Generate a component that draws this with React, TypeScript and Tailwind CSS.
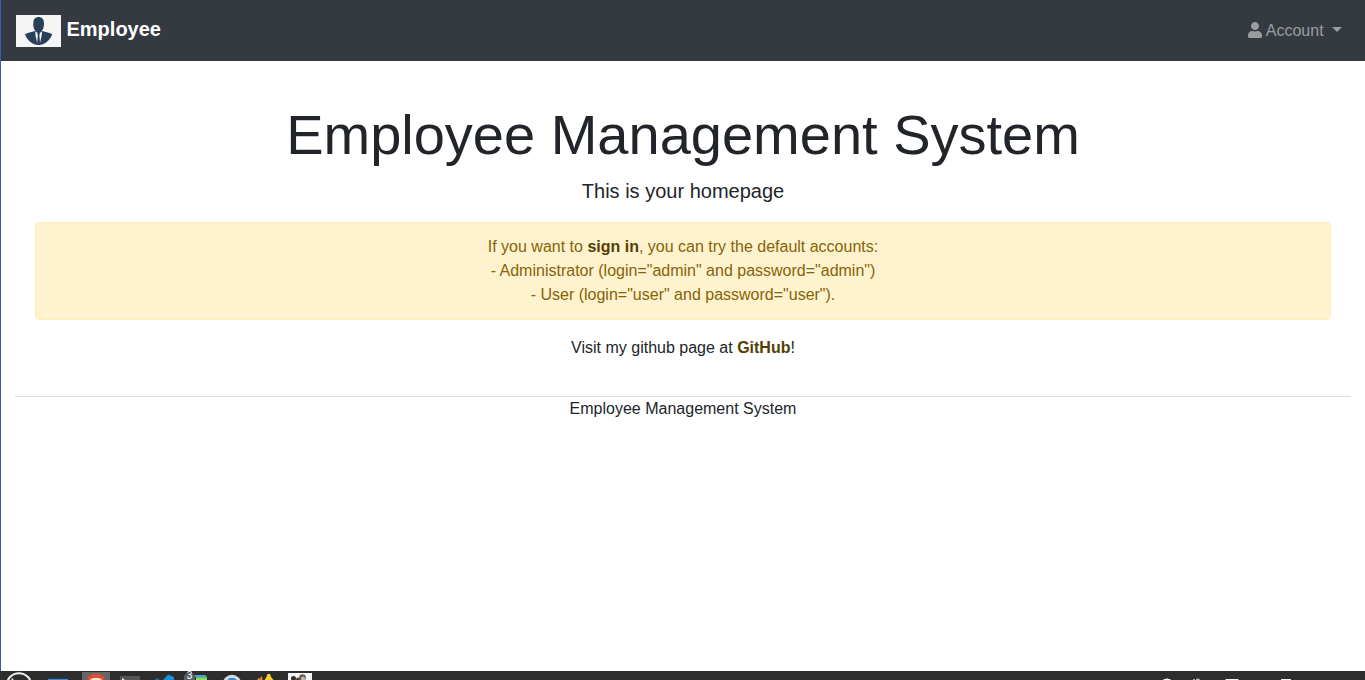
import React from "react";

function Portrait() {
  return (
    <svg viewBox="0 0 45 32" className="block h-8 w-[45px]" aria-hidden="true">
      <rect width="45" height="32" fill="#f5f5f5" />
      <path
        d="M17.800 16.200C15 17.400 11.500 17.400 9 19.300C11.500 26 16.500 29.900 22.600 29.900S33.700 26 36.200 19.300C33.700 17.400 30.200 17.400 27.400 16.200z"
        fill="#273f58"
      />
      <path d="M19.200 16.500L22.600 18.500L26 16.500L25.600 21L23.900 28.500H21.300L19.600 21z" fill="#f5f5f5" />
      <path d="M21.300 18h2.600l-.5 2.500l.8 9.200h-3.200l.8-9.200z" fill="#273f58" />
      <path d="M17.400 7.500C17.400 4 19.500 1.900 22.600 1.900S27.900 4 27.900 7.500C28.300 12.500 26.800 15.200 24.800 17H20.400C18.400 15.200 16.900 12.500 17.400 7.500z" fill="#273f58" />
    </svg>
  );
}

function UserIcon() {
  return (
    <svg viewBox="0 0 448 512" className="mb-px h-4 w-3.5" fill="currentColor" aria-hidden="true">
      <path d="M224 256c70.700 0 128-57.300 128-128S294.700 0 224 0 96 57.300 96 128s57.300 128 128 128zm89.600 32h-16.700c-22.200 10.200-46.900 16-72.900 16s-50.600-5.800-72.900-16h-16.700C60.200 288 0 348.200 0 422.400V464c0 26.500 21.500 48 48 48h352c26.500 0 48-21.500 48-48v-41.600c0-74.200-60.200-134.400-134.400-134.400z" />
    </svg>
  );
}

function Launchers() {
  return (
    <svg width="330" height="9" viewBox="0 0 330 9" className="block" aria-hidden="true">
      <circle cx="19" cy="14.500" r="12.300" fill="none" stroke="#eeeeee" strokeWidth="2" />
      <path d="M11.500 7.500h1.800V9h-1.800z" fill="#eeeeee" />
      <path d="M48 6.500h20V9H48z" fill="#20395f" />
      <path d="M48 8h20v1H48z" fill="#4b87cb" />
      <path d="M82 1h28v8H82z" fill="#666666" />
      <path d="M87.500 9V6l3-1L92 3h8l1.500 2 3 1v3z" fill="#ea4b2b" />
      <path d="M90.500 9V8l3-1h5l3 1v1z" fill="#f7e9e4" />
      <rect x="120" y="5" width="20" height="8" rx="1" fill="#555555" />
      <path d="M122 7l3 2h-3z" fill="#eeeeee" />
      <path d="M163 9l5-5.500 6 2.500v3z" fill="#1592dc" />
      <path d="M155 8l2-1 3 2h-5z" fill="#146ba5" />
      <path d="M196 4h9l2 2v3h-11z" fill="#5bc965" />
      <path d="M195 4h10l1 2h-11z" fill="#4e9cdf" />
      <path d="M196 7.500h11V9h-11z" fill="#9ee05c" />
      <circle cx="189.500" cy="7" r="5.700" fill="#596169" />
      <text x="186.700" y="8.400" fontSize="10" fontFamily="Liberation Sans, sans-serif" fill="#ffffff">3</text>
      <circle cx="232" cy="13" r="9.300" fill="#dadada" />
      <path d="M227.500 9l2-2h5l2.500 2z" fill="#348ce0" />
      <path d="M257 9l1.500-2 1 .5L262 5l.500 4z" fill="#ef7833" />
      <path d="M264.500 9l2-3 1-3h2.500l1 3 2.500 3z" fill="#f9d02d" />
      <path d="M288 2h24v7h-24z" fill="#f6f6f6" />
      <circle cx="293.500" cy="7.500" r="2.500" fill="#35302d" />
      <circle cx="298" cy="8.500" r="2" fill="#4b403a" />
      <circle cx="302.500" cy="6.500" r="3.300" fill="#625950" />
      <circle cx="303" cy="7.500" r="2" fill="#c8b8ab" />
    </svg>
  );
}

function TrayIcons() {
  return (
    <svg width="225" height="9" viewBox="0 0 225 9" className="block" fill="#eeeeee" aria-hidden="true">
      <path d="M23 9l1-1h1.500l.5-.5h2l.5.5h1.500l1 1z" />
      <path d="M53 8h2v1h-2zM56 8l1-.5h2l1 1.500h-4z" opacity=".7" />
      <path d="M85 9l1-1h12l1 1zM141 8h10v1h-10z" />
    </svg>
  );
}

export default function App() {
  return (
    <div className="flex h-[680px] w-full flex-col overflow-hidden bg-white font-['Liberation_Sans',Arial,sans-serif] text-base text-[#212529]">
      <div className="h-[671px] shrink-0 border-l border-[#3f58b5]">
        <nav className="flex h-[61px] items-center justify-between bg-[#353a40] pr-[23px] pl-[15px]">
          <a href="#" className="flex items-center text-white">
            <Portrait />
            <span className="ml-[5.5px] pb-1 text-xl leading-[30px] font-bold">Employee</span>
          </a>
          <button type="button" className="flex items-center text-[#9a9da0]">
            <UserIcon />
            <span className="ml-[3.6px]">Account</span>
            <span className="mb-[3px] ml-[8.400px] border-x-[5px] border-t-[5px] border-x-transparent border-t-current" />
          </button>
        </nav>
        <main className="px-[34px] pt-10 text-center">
          <h1 className="mb-2 text-[56px] leading-[67px]">Employee Management System</h1>
          <p className="mb-4 text-xl leading-[30px]">This is your homepage</p>
          <div className="mb-4 rounded border border-[#ffeeba] bg-[#fff2cf] p-3 text-[#856404]">
            <p>If you want to <b className="text-[#533f03]">sign in</b>, you can try the default accounts:</p>
            <p>- Administrator (login="admin" and password="admin")</p>
            <p>- User (login="user" and password="user").</p>
          </div>
          <p>Visit my github page at <b className="text-[#533f03]">GitHub</b>!</p>
        </main>
        <footer className="mx-3.5 mt-9 border-t border-[#dedede] text-center">
          <p>Employee Management System</p>
        </footer>
      </div>
      <div className="flex h-[9px] shrink-0 justify-between bg-[#2d2d2d]">
        <Launchers />
        <TrayIcons />
      </div>
    </div>
  );
}
